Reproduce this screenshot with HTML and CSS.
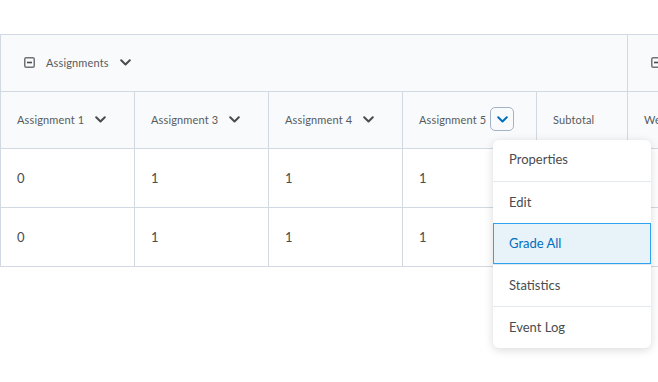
FILE: index.html
```html
<!DOCTYPE html>
<html>
<head>
<meta charset="utf-8">
<link rel="stylesheet" href="styles.css">
</head>
<body>
<div class="page">
  <table class="grid">
    <colgroup>
      <col class="c1"><col class="c1"><col class="c1"><col class="c1"><col class="c2"><col class="c3">
    </colgroup>
    <thead>
      <tr class="group-row">
        <th colspan="5" class="hd">
          <span class="hcell">
            <svg class="toggle" width="11" height="11" viewBox="0 0 11 11"><rect x="0.75" y="0.75" width="9.5" height="9.5" rx="1.5" fill="none" stroke="#6e7376" stroke-width="1.5"/><path d="M3 5.5h5" stroke="#494c4e" stroke-width="1.6"/></svg>
            <span class="lbl">Assignments</span>
            <svg class="chev" width="11" height="7" viewBox="0 0 11 7"><path d="M1.2 1.2l4.3 4.3 4.3-4.3" fill="none" stroke="#494c4e" stroke-width="2" stroke-linecap="round" stroke-linejoin="round"/></svg>
          </span>
        </th>
        <th class="hd">
          <span class="hcell">
            <svg class="toggle" width="11" height="11" viewBox="0 0 11 11"><rect x="0.75" y="0.75" width="9.5" height="9.5" rx="1.5" fill="none" stroke="#6e7376" stroke-width="1.5"/><path d="M3 5.5h5" stroke="#494c4e" stroke-width="1.6"/></svg>
            <span class="lbl">Weighted</span>
          </span>
        </th>
      </tr>
      <tr class="col-row">
        <th class="hd"><span class="hcell"><span class="lbl">Assignment 1</span><svg class="chev" width="11" height="7" viewBox="0 0 11 7"><path d="M1.2 1.2l4.3 4.3 4.3-4.3" fill="none" stroke="#494c4e" stroke-width="2" stroke-linecap="round" stroke-linejoin="round"/></svg></span></th>
        <th class="hd"><span class="hcell"><span class="lbl">Assignment 3</span><svg class="chev" width="11" height="7" viewBox="0 0 11 7"><path d="M1.2 1.2l4.3 4.3 4.3-4.3" fill="none" stroke="#494c4e" stroke-width="2" stroke-linecap="round" stroke-linejoin="round"/></svg></span></th>
        <th class="hd"><span class="hcell"><span class="lbl">Assignment 4</span><svg class="chev" width="11" height="7" viewBox="0 0 11 7"><path d="M1.2 1.2l4.3 4.3 4.3-4.3" fill="none" stroke="#494c4e" stroke-width="2" stroke-linecap="round" stroke-linejoin="round"/></svg></span></th>
        <th class="hd"><span class="hcell"><span class="lbl">Assignment 5</span><span class="btn"><svg width="11" height="7" viewBox="0 0 11 7"><path d="M1.2 1.2l4.3 4.3 4.3-4.3" fill="none" stroke="#006fbf" stroke-width="2" stroke-linecap="round" stroke-linejoin="round"/></svg></span></span></th>
        <th class="hd"><span class="hcell"><span class="lbl">Subtotal</span></span></th>
        <th class="hd"><span class="hcell"><span class="lbl">Weighted Subtotal</span></span></th>
      </tr>
    </thead>
    <tbody>
      <tr><td>0</td><td>1</td><td>1</td><td>1</td><td></td><td></td></tr>
      <tr><td>0</td><td>1</td><td>1</td><td>1</td><td></td><td></td></tr>
    </tbody>
  </table>
  <ul class="menu">
    <li class="item">Properties</li>
    <li class="item">Edit</li>
    <li class="item active">Grade All</li>
    <li class="item">Statistics</li>
    <li class="item">Event Log</li>
  </ul>
</div>
</body>
</html>
```

FILE: styles.css
```css
html, body {
  margin: 0;
  padding: 0;
  background: #ffffff;
  overflow: hidden;
  width: 658px;
  height: 382px;
}
body {
  font-family: Lato, "Noto Sans", sans-serif;
  color: #494c4e;
}
.page {
  position: relative;
  padding-top: 34px;
}
.grid {
  border-collapse: collapse;
  table-layout: fixed;
  width: 800px;
}
.c1 { width: 134px; }
.c2 { width: 91px; }
.c3 { width: 173px; }
.grid th, .grid td {
  border: 1px solid #d3d9e3;
  padding: 0 0 0 16px;
  text-align: left;
  white-space: nowrap;
  overflow: hidden;
}
.hd {
  background: #f9fafc;
  height: 54px;
  padding-bottom: 2px !important;
  font-weight: 400;
  font-size: 11px;
  color: #565a5c;
}
.hcell {
  display: flex;
  align-items: center;
}
.toggle { margin: 0 11px 0 7px; flex: none; }
.lbl { letter-spacing: 0.15px; }
.chev { margin-left: 11px; flex: none; }
.btn {
  display: inline-flex;
  align-items: center;
  justify-content: center;
  width: 22px;
  height: 22px;
  border: 1px solid #a3b3c6;
  border-radius: 5px;
  margin-left: 4px;
  background: #f9fafc;
}
.grid td {
  height: 57px;
  padding-bottom: 1px;
  font-size: 13px;
  color: #494c4e;
}
.menu {
  position: absolute;
  left: 493px;
  top: 140px;
  width: 158px;
  margin: 0;
  padding: 0;
  list-style: none;
  background: #fff;
  border-radius: 6px;
  box-shadow: 0 2px 10px rgba(0, 0, 0, 0.15);
  overflow: hidden;
}
.item {
  height: 41px;
  line-height: 40px;
  padding-left: 16px;
  font-size: 13px;
  color: #494c4e;
  border-top: 1px solid #e3e9f1;
}
.item:first-child { border-top: none; height: 41px; line-height: 39px; }
.item.active {
  background: #e8f2f9;
  color: #006fbf;
  border: 1px solid #2fa3f0;
  height: 39px;
  line-height: 39px;
  padding-left: 15px;
}
```
